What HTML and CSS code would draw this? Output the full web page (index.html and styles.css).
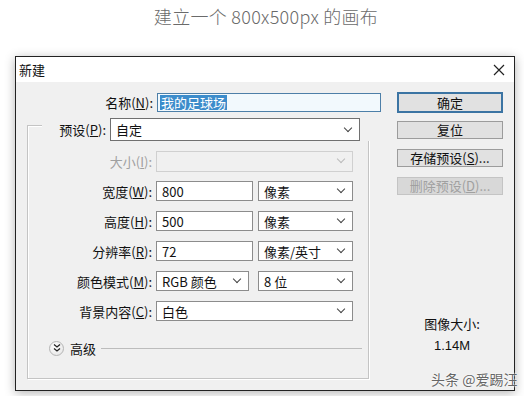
FILE: index.html
```html
<!DOCTYPE html>
<html lang="zh-CN">
<head>
    <meta charset="UTF-8">
    <title>新建</title>
    <link rel="stylesheet" href="styles.css">
</head>
<body>

<div class="caption">建立一个 800x500px 的画布</div>

<div class="dialog">
    <div class="titlebar">
        <span>新建</span>
        <svg class="close" width="12" height="12" viewBox="0 0 12 12"><path d="M1 1L11 11M11 1L1 11" stroke="#222" stroke-width="1.2" fill="none"/></svg>
    </div>
    <div class="dialog-body">
        <div class="form">
            <div class="row name-row">
                <label class="lbl">名称(<u>N</u>):</label>
                <div class="field name-field"><span class="sel">我的足球场</span></div>
            </div>

            <div class="group">
                <div class="group-head">
                    <label class="lbl-head">预设(<u>P</u>):</label>
                    <div class="field dd preset">自定<i class="chev"></i></div>
                </div>

                <div class="row">
                    <label class="lbl off">大小(<u>I</u>):</label>
                    <div class="field dd wide disabled"><i class="chev"></i></div>
                </div>
                <div class="row">
                    <label class="lbl">宽度(<u>W</u>):</label>
                    <div class="field num">800</div>
                    <div class="field dd unit">像素<i class="chev"></i></div>
                </div>
                <div class="row">
                    <label class="lbl">高度(<u>H</u>):</label>
                    <div class="field num">500</div>
                    <div class="field dd unit">像素<i class="chev"></i></div>
                </div>
                <div class="row">
                    <label class="lbl">分辨率(<u>R</u>):</label>
                    <div class="field num">72</div>
                    <div class="field dd unit">像素/英寸<i class="chev"></i></div>
                </div>
                <div class="row">
                    <label class="lbl">颜色模式(<u>M</u>):</label>
                    <div class="field dd mode">RGB 颜色<i class="chev"></i></div>
                    <div class="field dd unit">8 位<i class="chev"></i></div>
                </div>
                <div class="row">
                    <label class="lbl">背景内容(<u>C</u>):</label>
                    <div class="field dd wide">白色<i class="chev"></i></div>
                </div>

                <div class="advanced">
                    <span class="adv-btn">
                        <svg width="10" height="10" viewBox="0 0 10 10"><path d="M2 1.5L5 4L8 1.5M2 5.5L5 8L8 5.5" stroke="#222" stroke-width="1.3" fill="none"/></svg>
                    </span>
                    <span class="adv-text">高级</span>
                    <span class="adv-line"></span>
                </div>
            </div>
        </div>

        <div class="side">
            <div class="btn default">确定</div>
            <div class="btn">复位</div>
            <div class="btn">存储预设(<u>S</u>)...</div>
            <div class="btn off">删除预设(<u>D</u>)...</div>
            <div class="size-info">
                <div>图像大小:</div>
                <div class="size-val">1.14M</div>
            </div>
        </div>
    </div>
</div>

<div class="watermark">头条 @爱踢汪</div>

</body>
</html>
```

FILE: styles.css
```css
body {
    margin: 0;
    width: 524px;
    height: 396px;
    background: #fff;
    font-family: 'Noto Sans CJK SC', 'Noto Sans', sans-serif;
    font-size: 13px;
    color: #111;
    position: relative;
    overflow: hidden;
}
.caption {
    height: 36px;
    padding: 3px 0 0 8px;
    text-align: center;
    font-size: 18px;
    font-weight: 300;
    letter-spacing: 0.3px;
    color: #6a6a6a;
    line-height: 26px;
}
.dialog {
    margin: 17px 0 0 15px;
    width: 498px;
    height: 333px;
    border: 1px solid #222;
    box-shadow: 0 2px 10px rgba(0,0,0,0.3);
    background: #f0f0f0;
    display: flex;
    flex-direction: column;
}
.titlebar {
    height: 25px;
    background: #fff;
    display: flex;
    align-items: center;
    justify-content: space-between;
    padding: 0 9px 0 3px;
    font-size: 13px;
}
.dialog-body {
    flex: 1;
    display: flex;
    padding-top: 10px;
}
.form {
    width: 368px;
}
.row {
    display: flex;
    align-items: center;
    height: 20px;
}
.lbl {
    width: 137px;
    text-align: right;
    padding-right: 4px;
    white-space: nowrap;
}
.lbl.off, .btn.off {
    color: #a0a0a0;
}
.field {
    box-sizing: border-box;
    height: 20px;
    border: 1px solid #8c8c8c;
    background: #fff;
    display: flex;
    align-items: center;
    padding-left: 5px;
    position: relative;
    line-height: 1;
}
.name-field {
    width: 224px;
    height: 19px;
    border-color: #4d7fa8;
    background: #f2f9fd;
    padding-left: 2px;
}
.sel {
    background: #3c8ccb;
    color: #fff;
    padding: 1px 1px;
}
.group {
    margin: 13px 0 0 11px;
    width: 340px;
    height: 252px;
    border: 1px solid #c4c4c4;
    box-shadow: inset 1px 1px 0 #fff, 1px 1px 0 #fff;
}
.group-head {
    display: flex;
    align-items: center;
    margin: -8px -7px 0 14px;
    padding-left: 2px;
    background: #f0f0f0;
}
.lbl-head {
    width: 66px;
    text-align: right;
    padding-right: 4px;
    box-sizing: border-box;
    white-space: nowrap;
}
.preset {
    width: 250px;
    height: 23px;
    border-color: #707070;
}
.group .row {
    margin-top: 10px;
}
.group .row:first-of-type {
    margin-top: 8px;
}
.group .lbl {
    width: 124px;
}
.wide { width: 197px; }
.num { width: 97px; margin-right: 5px; }
.unit { width: 95px; }
.mode { width: 93px; margin-right: 9px; }
.disabled {
    background: #f0f0f0;
    border-color: #d0d0d0;
    height: 21px;
}
.disabled .chev { border-color: #bbb; }
.chev {
    position: absolute;
    right: 8px;
    top: 50%;
    width: 5px;
    height: 5px;
    margin-top: -5px;
    border-right: 1px solid #444;
    border-bottom: 1px solid #444;
    transform: rotate(45deg);
}
.advanced {
    display: flex;
    align-items: center;
    margin: 19px 0 0 21px;
    height: 16px;
}
.adv-btn {
    width: 13px;
    height: 13px;
    border-radius: 50%;
    border: 1px solid #b5b5b5;
    background: radial-gradient(circle at 40% 35%, #fff, #e2e2e2);
    display: flex;
    align-items: center;
    justify-content: center;
}
.adv-text {
    margin-left: 6px;
}
.adv-line {
    flex: 1;
    height: 0;
    border-top: 1px solid #bcbcbc;
    margin: 1px 6px 0 5px;
}
.side {
    width: 106px;
    margin-left: 13px;
    display: flex;
    flex-direction: column;
}
.btn {
    box-sizing: border-box;
    height: 18px;
    margin-bottom: 10px;
    border: 1px solid #9c9c9c;
    background: #e1e1e1;
    text-align: center;
    line-height: 16px;
}
.btn.default {
    height: 21px;
    border: 2px solid #3b74a3;
    line-height: 17px;
    margin-bottom: 8px;
}
.btn.off {
    background: #d8d8d8;
    border-color: #c4c4c4;
}
.size-info {
    margin-top: 108px;
    text-align: center;
    line-height: 22px;
    padding-left: 4px;
}
.size-val {
    font-family: 'Liberation Sans', sans-serif;
    font-size: 13px;
}
.watermark {
    position: absolute;
    left: 431px;
    top: 369px;
    font-size: 14px;
    color: #666;
    text-shadow: 0 0 2px #fff, 0 0 2px #fff;
}
```
